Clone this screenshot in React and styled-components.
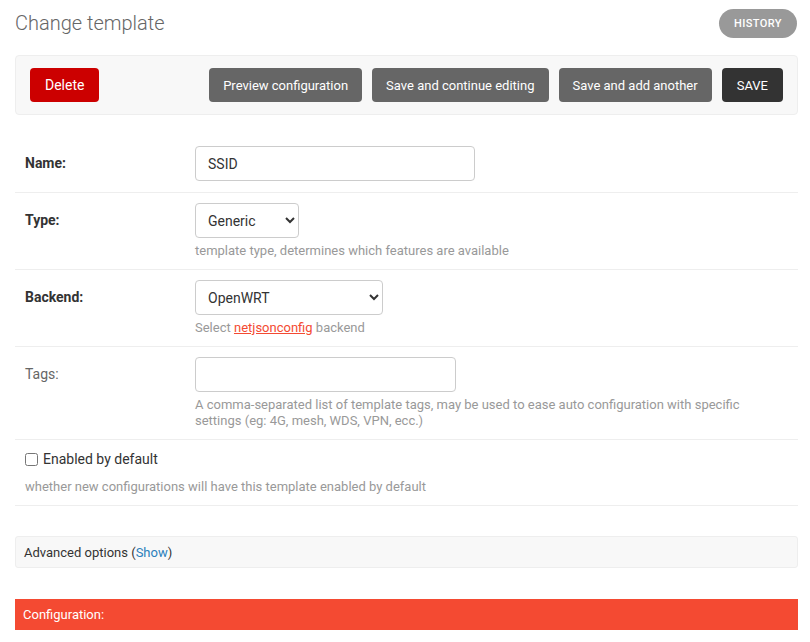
import React from "react";
import styled, { createGlobalStyle } from "styled-components";

const GlobalStyle = createGlobalStyle`
  html, body {
    margin: 0;
    padding: 0;
    background: #fff;
  }
  body {
    font-family: Roboto, "Liberation Sans", Arial, sans-serif;
    font-size: 14px;
    color: #333;
  }
`;

const Page = styled.div`
  padding: 8px 12px 12px 15px;
`;

const Header = styled.div`
  display: flex;
  align-items: center;
  justify-content: space-between;
  height: 30px;
`;

const Title = styled.h1`
  margin: 0;
  font-size: 20px;
  font-weight: 300;
  color: #666;
  line-height: 24px;
`;

const HistoryLink = styled.a`
  display: inline-flex;
  align-items: center;
  height: 29px;
  padding: 0 15px;
  margin-right: 1px;
  border-radius: 15px;
  background: #999;
  color: #fff;
  font-size: 11px;
  font-weight: 500;
  letter-spacing: 0.4px;
  text-transform: uppercase;
  text-decoration: none;
`;

const SubmitRow = styled.div`
  margin-top: 17px;
  display: flex;
  align-items: center;
  gap: 10px;
  padding: 12px 14px;
  background: #f8f8f8;
  border: 1px solid #eee;
  border-radius: 4px;
`;

const Spacer = styled.div`
  flex: 1;
`;

const Button = styled.button`
  height: 34px;
  padding: 0 ${(p) => (p.variant ? 15 : 14)}px;
  border: none;
  border-radius: 4px;
  font-family: inherit;
  font-size: ${(p) => (p.variant === "danger" ? 14 : 13)}px;
  color: #fff;
  background: ${(p) =>
    p.variant === "danger" ? "#cc0000" : p.variant === "default" ? "#333" : "#666"};
  cursor: pointer;
`;

const Form = styled.div`
  margin-top: 21px;
`;

const Row = styled.div`
  display: flex;
  padding: 10px 10px ${(p) => (p.hasHelp ? 10 : 11)}px;
  border-bottom: 1px solid #eee;
`;

const Label = styled.label`
  width: 170px;
  flex-shrink: 0;
  line-height: 35px;
  font-size: 14px;
  font-weight: ${(p) => (p.required ? 700 : 400)};
  color: ${(p) => (p.required ? "#333" : "#666")};
`;

const Field = styled.div`
  flex: 1;
  min-width: 0;
`;

const TextInput = styled.input`
  box-sizing: border-box;
  width: ${(p) => p.width}px;
  height: 35px;
  padding: 0 12px;
  border: 1px solid #ccc;
  border-radius: 4px;
  font-family: inherit;
  font-size: 14px;
  color: #333;
  background: #fff;
  outline: none;
`;

const Select = styled.select`
  box-sizing: border-box;
  width: ${(p) => p.width}px;
  height: 35px;
  padding: 0 8px;
  border: 1px solid #ccc;
  border-radius: 4px;
  font-family: inherit;
  font-size: 14px;
  color: #333;
  background: #fff;
`;

const Help = styled.div`
  margin-top: ${(p) => p.gap || 5}px;
  font-size: 13px;
  line-height: 16px;
  color: #999;
`;

const HelpLink = styled.a`
  color: #f44a32;
  text-decoration: underline;
`;

const CheckRow = styled.div`
  padding: 9px 10px 10px;
  border-bottom: 1px solid #eee;
`;

const CheckLabel = styled.label`
  display: flex;
  align-items: center;
  gap: 5px;
  height: 20px;
  font-size: 14px;
  color: #333;

  input {
    margin: 0;
    width: 13px;
    height: 13px;
  }
`;

const Collapsed = styled.div`
  margin-top: 30px;
  height: 30px;
  display: flex;
  align-items: center;
  padding: 0 8px;
  background: #f8f8f8;
  border: 1px solid #eee;
  border-radius: 3px;
  font-size: 13px;
  color: #333;
`;

const ShowLink = styled.a`
  color: #2b7fbb;
  text-decoration: none;
`;

const SectionBar = styled.div`
  margin-top: 31px;
  height: 31px;
  display: flex;
  align-items: center;
  padding: 0 8px;
  background: #f44a32;
  color: #fff;
  font-size: 13px;
`;

export default function App() {
  return (
    <>
      <GlobalStyle />
      <Page>
        <Header>
          <Title>Change template</Title>
          <HistoryLink href="#">History</HistoryLink>
        </Header>

        <SubmitRow>
          <Button variant="danger">Delete</Button>
          <Spacer />
          <Button>Preview configuration</Button>
          <Button>Save and continue editing</Button>
          <Button>Save and add another</Button>
          <Button variant="default">SAVE</Button>
        </SubmitRow>

        <Form>
          <Row>
            <Label required>Name:</Label>
            <Field>
              <TextInput width={280} defaultValue="SSID" />
            </Field>
          </Row>
          <Row hasHelp>
            <Label required>Type:</Label>
            <Field>
              <Select width={104} defaultValue="generic">
                <option value="generic">Generic</option>
                <option value="vpn">VPN-client</option>
              </Select>
              <Help>template type, determines which features are available</Help>
            </Field>
          </Row>
          <Row hasHelp>
            <Label required>Backend:</Label>
            <Field>
              <Select width={188} defaultValue="openwrt">
                <option value="openwrt">OpenWRT</option>
                <option value="openwisp">OpenWISP Firmware 1.x</option>
              </Select>
              <Help>
                Select <HelpLink href="#">netjsonconfig</HelpLink> backend
              </Help>
            </Field>
          </Row>
          <Row hasHelp>
            <Label>Tags:</Label>
            <Field>
              <TextInput width={261} />
              <Help>
                A comma-separated list of template tags, may be used to ease auto
                configuration with specific settings (eg: 4G, mesh, WDS, VPN, ecc.)
              </Help>
            </Field>
          </Row>
          <CheckRow>
            <CheckLabel>
              <input type="checkbox" />
              Enabled by default
            </CheckLabel>
            <Help gap={10}>
              whether new configurations will have this template enabled by default
            </Help>
          </CheckRow>
        </Form>

        <Collapsed>
          Advanced options&nbsp;(<ShowLink href="#">Show</ShowLink>)
        </Collapsed>

        <SectionBar>Configuration:</SectionBar>
      </Page>
    </>
  );
}
